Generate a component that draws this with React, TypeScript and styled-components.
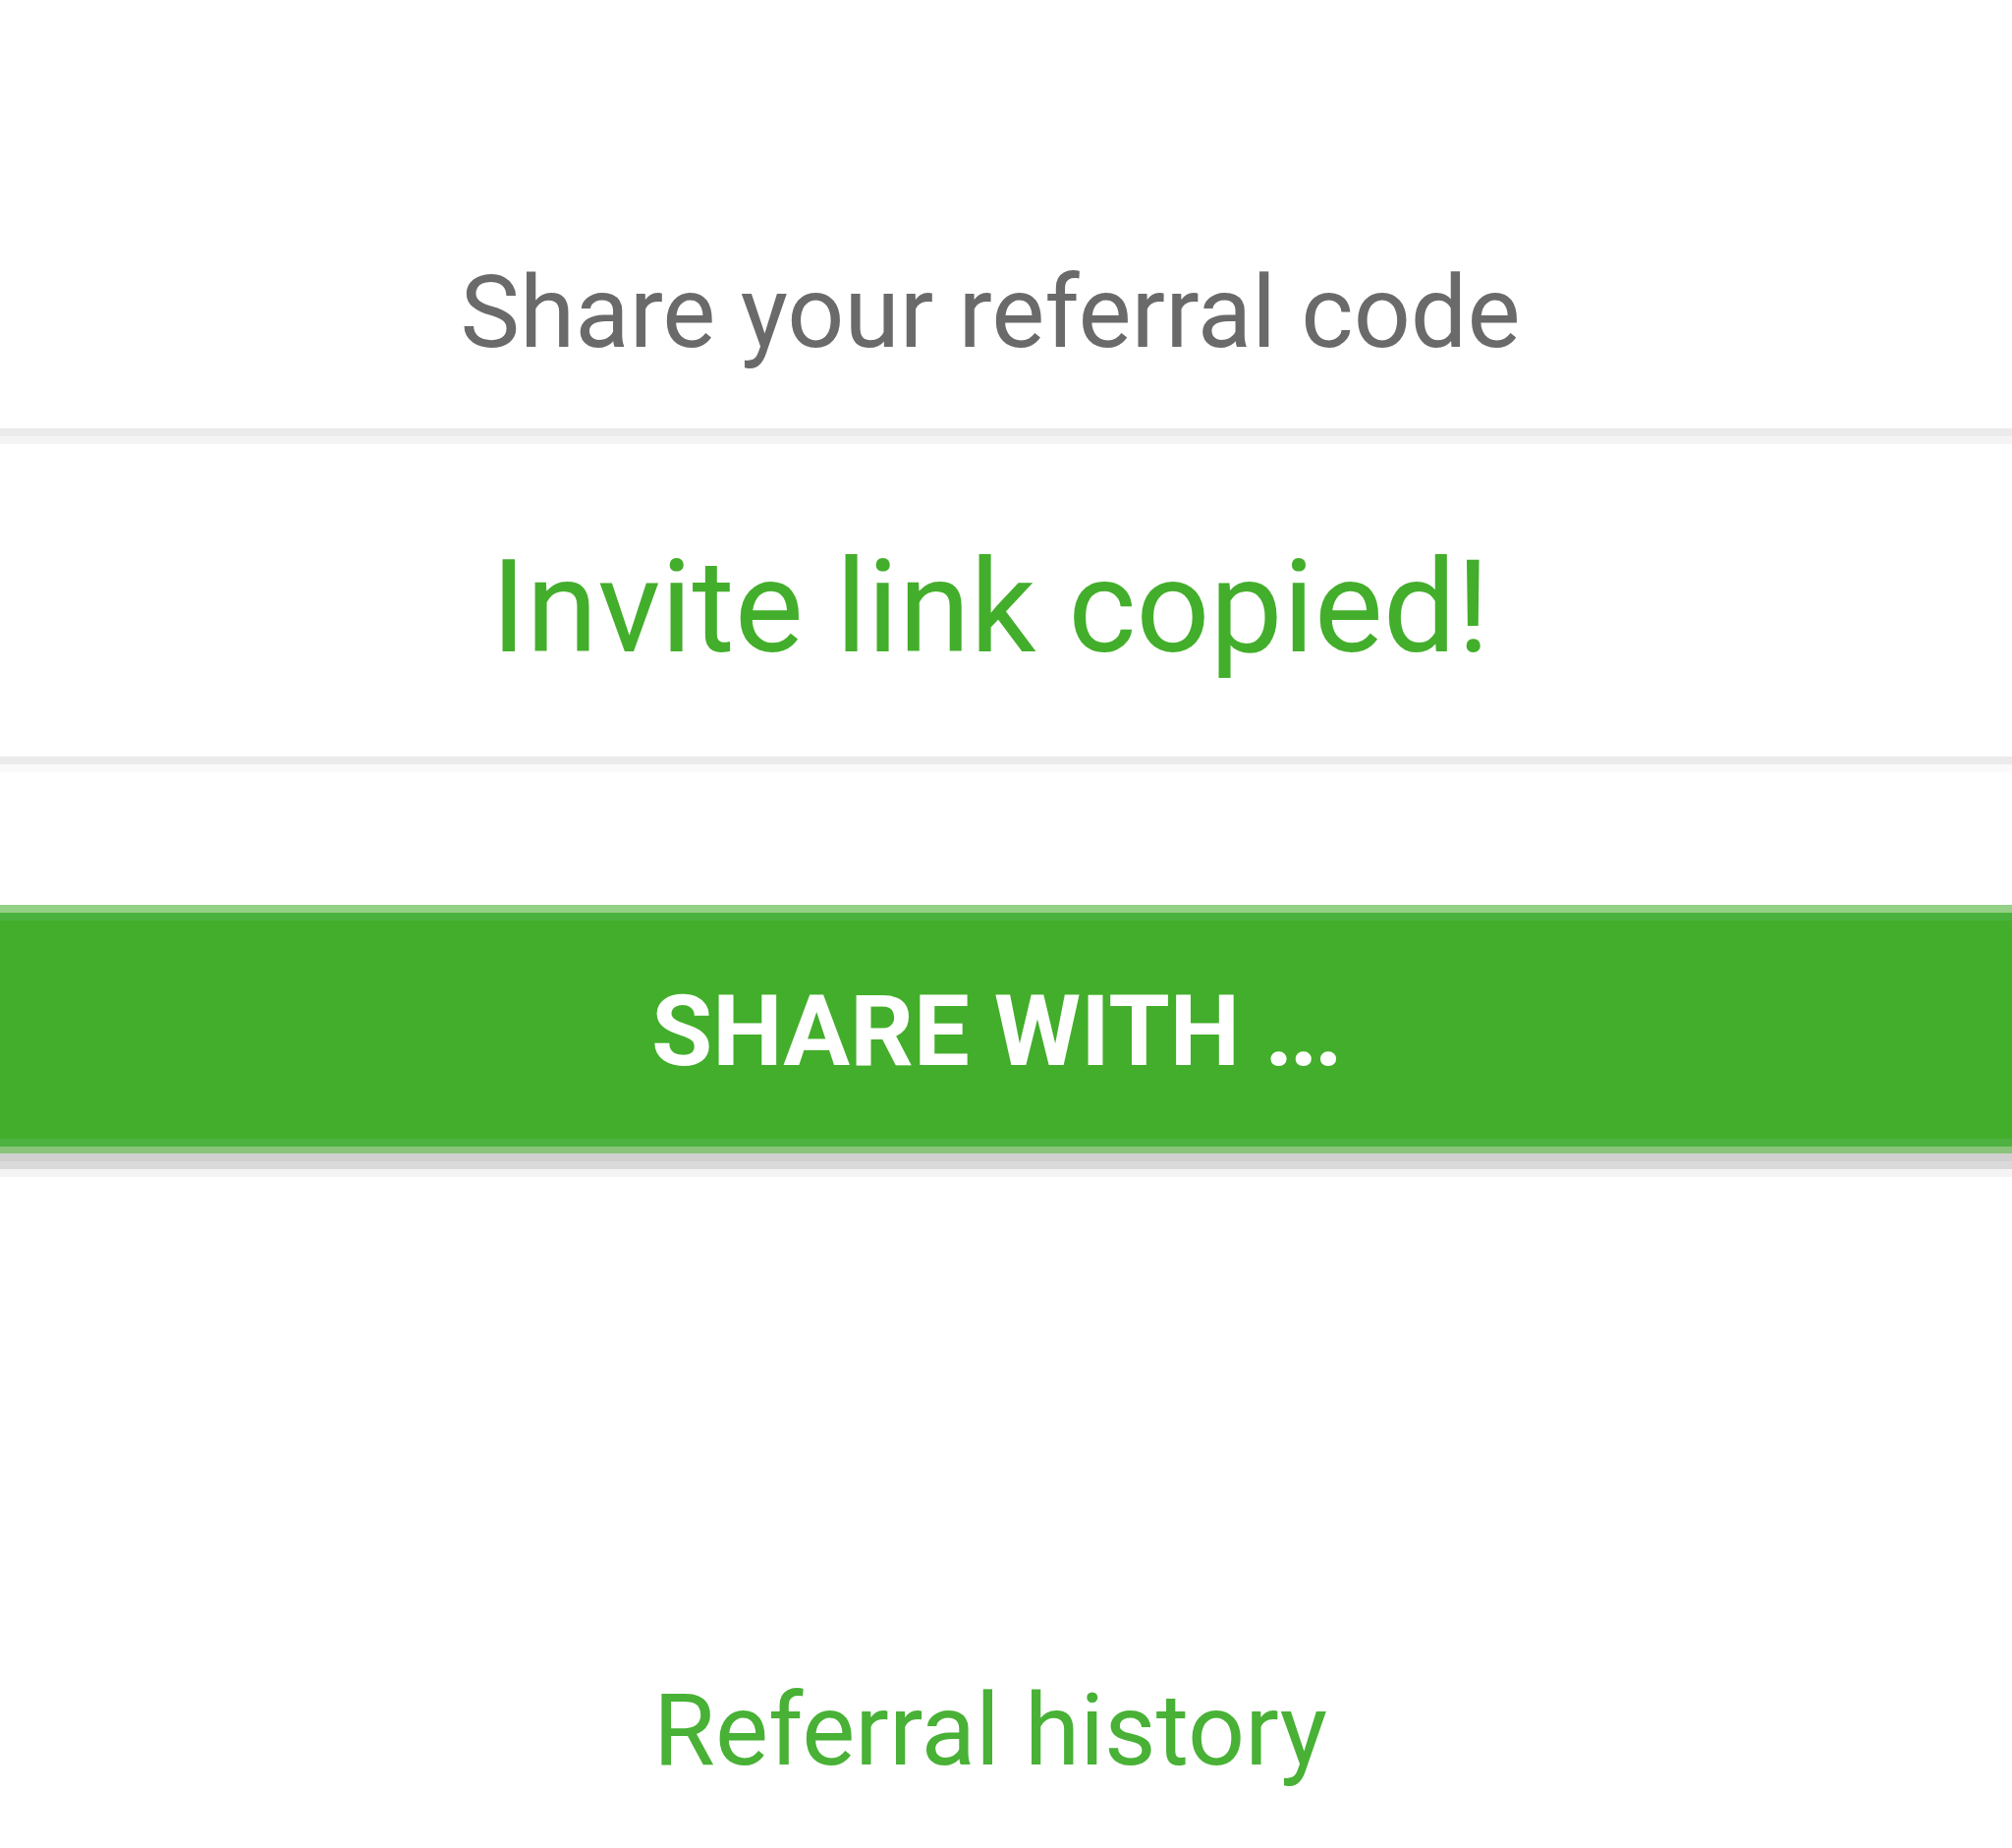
import React from "react";
import styled, { createGlobalStyle } from "styled-components";

const GlobalStyle = createGlobalStyle`
  html, body {
    margin: 0;
    padding: 0;
    background: #ffffff;
  }
  body {
    font-family: Roboto, "Noto Sans", "Liberation Sans", sans-serif;
    -webkit-font-smoothing: antialiased;
  }
`;

const GREEN = "#43ae2b";

const Page = styled.main`
  display: flex;
  flex-direction: column;
  width: 100%;
  min-height: 1881px;
  background: #ffffff;
`;

const Header = styled.header`
  display: flex;
  justify-content: center;
  padding: 267px 32px 67px 0;
`;

const Title = styled.h1`
  margin: 0;
  font-size: 102px;
  line-height: 102px;
  font-weight: 400;
  color: #6a6a6a;
`;

const Divider = styled.hr<{ $shade: string }>`
  margin: 0;
  border: 0;
  height: 8px;
  background: #ebebeb;
  box-shadow: 0 8px 0 ${(p) => p.$shade};
  position: relative;
  z-index: 1;
`;

const MessageRow = styled.section`
  display: flex;
  justify-content: center;
  padding: 108px 32px 86px 0;
`;

const Message = styled.p`
  margin: 0;
  font-size: 132px;
  line-height: 132px;
  font-weight: 400;
  color: ${GREEN};
`;

const ShareButton = styled.button`
  display: flex;
  align-items: center;
  justify-content: center;
  width: 100%;
  height: 253px;
  margin-top: 143px;
  padding: 4px 22px 0 0;
  border: 0;
  border-radius: 0;
  cursor: pointer;
  background: linear-gradient(
    to bottom,
    #94d085 0px,
    #94d085 8px,
    #4bb13e 8px,
    #4bb13e 16px,
    ${GREEN} 16px,
    ${GREEN} calc(100% - 15px),
    #4db240 calc(100% - 15px),
    #4db240 calc(100% - 7px),
    #8ac47a calc(100% - 7px),
    #8ac47a 100%
  );
  box-shadow: 0 8px 0 #d0d0d0, 0 16px 0 #dadada, 0 24px 0 #f3f4f3;
  font-family: Roboto, "Noto Sans", "Liberation Sans", sans-serif;
  font-size: 101px;
  font-weight: 700;
  line-height: 101px;
  letter-spacing: 0;
  text-transform: uppercase;
  color: #ffffff;
`;

const Dots = styled.span`
  letter-spacing: -0.04em;
`;

const Footer = styled.footer`
  display: flex;
  justify-content: center;
  padding: 536px 32px 0 0;
`;

const HistoryLink = styled.a`
  font-size: 102px;
  line-height: 102px;
  font-weight: 400;
  color: #48b136;
  text-decoration: none;
  cursor: pointer;
`;

export default function App() {
  return (
    <>
      <GlobalStyle />
      <Page>
        <Header>
          <Title>Share your referral code</Title>
        </Header>
        <Divider $shade="#f3f4f3" />
        <MessageRow>
          <Message>Invite link copied!</Message>
        </MessageRow>
        <Divider $shade="#fafafa" />
        <ShareButton type="button">
          Share with&nbsp;<Dots>...</Dots>
        </ShareButton>
        <Footer>
          <HistoryLink href="#history">Referral history</HistoryLink>
        </Footer>
      </Page>
    </>
  );
}
